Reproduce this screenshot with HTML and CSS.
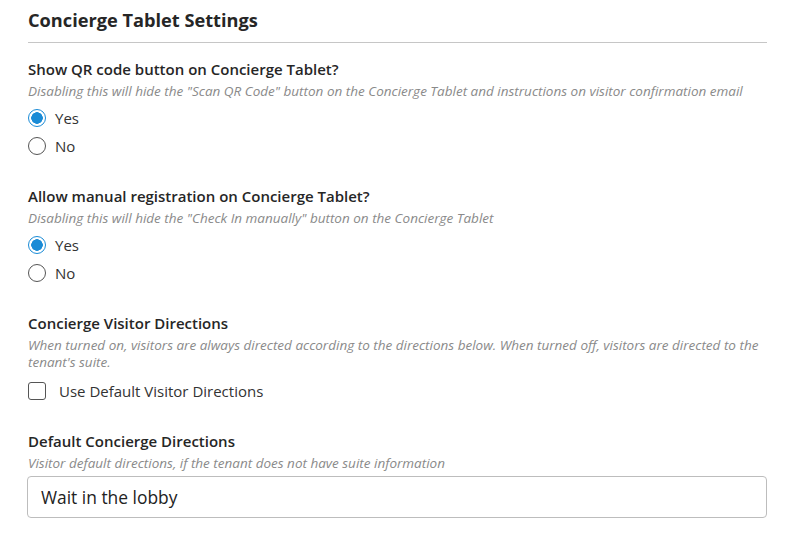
FILE: index.html
```html
<!DOCTYPE html>
<html lang="en">
<head>
<meta charset="utf-8">
<title>Concierge Tablet Settings</title>
<link rel="stylesheet" href="styles.css">
</head>
<body>
<main class="settings">
  <h1 class="settings-title">Concierge Tablet Settings</h1>
  <hr class="divider">

  <section class="field">
    <div class="field-label">Show QR code button on Concierge Tablet?</div>
    <div class="field-help">Disabling this will hide the "Scan QR Code" button on the Concierge Tablet and instructions on visitor confirmation email</div>
    <div class="options">
      <label class="option"><span class="radio checked"></span><span class="option-text">Yes</span></label>
      <label class="option"><span class="radio"></span><span class="option-text">No</span></label>
    </div>
  </section>

  <section class="field">
    <div class="field-label">Allow manual registration on Concierge Tablet?</div>
    <div class="field-help">Disabling this will hide the "Check In manually" button on the Concierge Tablet</div>
    <div class="options">
      <label class="option"><span class="radio checked"></span><span class="option-text">Yes</span></label>
      <label class="option"><span class="radio"></span><span class="option-text">No</span></label>
    </div>
  </section>

  <section class="field">
    <div class="field-label">Concierge Visitor Directions</div>
    <div class="field-help">When turned on, visitors are always directed according to the directions below. When turned off, visitors are directed to the tenant's suite.</div>
    <label class="option checkbox-option"><span class="checkbox"></span><span class="option-text">Use Default Visitor Directions</span></label>
  </section>

  <section class="field">
    <div class="field-label">Default Concierge Directions</div>
    <div class="field-help">Visitor default directions, if the tenant does not have suite information</div>
    <div class="text-input">Wait in the lobby</div>
  </section>
</main>
</body>
</html>
```

FILE: styles.css
```css
* { box-sizing: border-box; }
html, body { margin: 0; padding: 0; background: #fff; }
body {
  font-family: "Open Sans", "Noto Sans", sans-serif;
  color: #2a2a2a;
}
.settings {
  width: 739px;
  margin-left: 28px;
  padding-top: 8px;
}
.settings-title {
  margin: 0;
  font-size: 18.2px;
  line-height: 24px;
  font-weight: 700;
  color: #262626;
}
.divider {
  margin: 10px 0 0;
  border: 0;
  border-top: 1px solid #c6c6c6;
  height: 0;
}
.field { margin-top: 25px; }
.field:first-of-type { margin-top: 15px; }
.field-label {
  font-size: 15px;
  line-height: 22px;
  font-weight: 600;
  color: #262626;
}
.field-help {
  margin-top: 3px;
  font-size: 13.5px;
  line-height: 17px;
  font-style: italic;
  color: #8a8a8a;
}
.options { margin-top: 4px; display: flex; flex-direction: column; }
.option {
  display: flex;
  align-items: center;
  height: 28px;
  font-size: 15px;
  color: #333;
}
.radio {
  width: 18px;
  height: 18px;
  border-radius: 50%;
  border: 1px solid #555;
  margin-right: 9px;
  flex: none;
  background: #fff;
}
.radio.checked {
  border: 1.5px solid #1a8bd6;
  background: radial-gradient(circle, #1a8bd6 0 5.5px, #fff 6px);
}
.checkbox-option { margin-top: 6px; }
.checkbox {
  width: 18px;
  height: 18px;
  border-radius: 3px;
  border: 1px solid #555;
  margin-right: 13px;
  flex: none;
}
.text-input {
  margin-top: 4px;
  margin-left: -1px;
  height: 42px;
  border: 1px solid #bdbdbd;
  border-radius: 4px;
  padding: 0 13px;
  display: flex;
  align-items: center;
  font-size: 17.4px;
  color: #222;
}
```
